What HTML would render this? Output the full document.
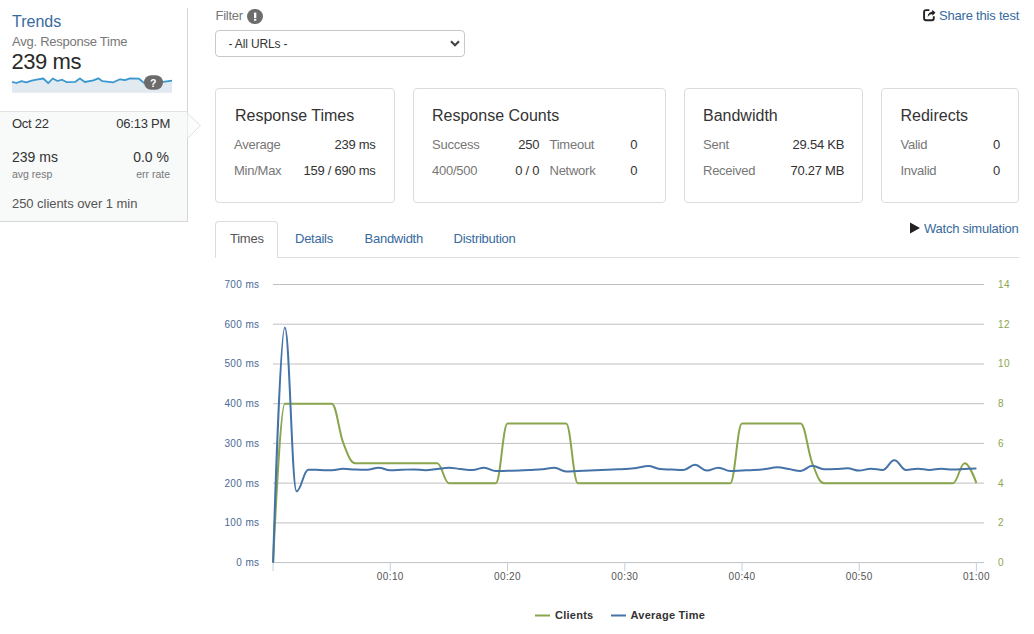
<!DOCTYPE html>
<html><head><meta charset="utf-8">
<style>
html,body{margin:0;padding:0;background:#fff;width:1034px;height:634px;overflow:hidden;position:relative;font-family:"Liberation Sans",sans-serif;}
.t{position:absolute;white-space:nowrap;line-height:1;}
.s13{font-size:13px;letter-spacing:-0.25px;}
.s16{font-size:16px;}
.g{color:#777;}
.d{color:#333;}
.lnk{color:#386a9e;}
.card{position:absolute;top:88px;height:113px;border:1px solid #dcdcdc;border-radius:4px;box-sizing:content-box;}
</style></head>
<body>
<!-- left panel -->
<div style="position:absolute;left:187px;top:8px;width:1px;height:214px;background:#d6d6d6"></div>
<div style="position:absolute;left:0;top:111px;width:187px;height:1px;background:#e2e2e2"></div>
<div style="position:absolute;left:0;top:112px;width:187px;height:109px;background:#f8f9f9"></div>
<div style="position:absolute;left:0;top:221px;width:188px;height:1px;background:#d6d6d6"></div>
<svg style="position:absolute;left:0;top:0" width="220" height="230">
<polyline points="187.5,113.5 200.5,125.5 187.5,138.5" fill="#fcfcfc" stroke="#e0e0e0" stroke-width="1"/>
<path d="M12.1 81.8 L16.5 83.0 L21.4 81.2 L26.3 82.3 L31.6 80.6 L36.4 79.6 L43.3 78.5 L48.2 83.2 L52.7 78.5 L57.6 81.0 L62.0 79.7 L66.9 82.2 L75.4 81.8 L79.9 78.4 L84.8 82.0 L93.3 80.4 L98.3 78.3 L102.5 81.2 L113.3 82.3 L120.0 79.3 L125.0 80.1 L130.0 78.3 L139.0 78.7 L144.0 82.9 L153.0 84.0 L163.2 81.8 L172.0 80.6 L172 92.7 L12.1 92.7 Z" fill="#e1e9f1"/>
<path d="M12.1 81.8 L16.5 83.0 L21.4 81.2 L26.3 82.3 L31.6 80.6 L36.4 79.6 L43.3 78.5 L48.2 83.2 L52.7 78.5 L57.6 81.0 L62.0 79.7 L66.9 82.2 L75.4 81.8 L79.9 78.4 L84.8 82.0 L93.3 80.4 L98.3 78.3 L102.5 81.2 L113.3 82.3 L120.0 79.3 L125.0 80.1 L130.0 78.3 L139.0 78.7 L144.0 82.9 L153.0 84.0 L163.2 81.8 L172.0 80.6" fill="none" stroke="#3a98cf" stroke-width="1.8" stroke-linejoin="round"/>
<rect x="144" y="75.2" width="19" height="14.6" rx="7.3" fill="#6b6b6b"/>
<text x="153.2" y="86.8" font-family="Liberation Sans" font-weight="bold" font-size="10.5" fill="#fff" text-anchor="middle">?</text>
</svg>
<div class="t s16 lnk" style="left:12px;top:14px">Trends</div>
<div class="t s13 g" style="left:12px;top:34.5px">Avg. Response Time</div>
<div class="t" style="left:11.5px;top:51.1px;font-size:22px;letter-spacing:-0.45px;color:#2a2a2a">239 ms</div>
<div class="t s13 d" style="left:12px;top:116.8px">Oct 22</div>
<div class="t s13 d" style="right:864px;top:116.8px">06:13 PM</div>
<div class="t d" style="left:12px;top:149.9px;font-size:14px">239 ms</div>
<div class="t d" style="right:865px;top:149.9px;font-size:14px">0.0 %</div>
<div class="t g" style="left:12px;top:168.6px;font-size:10.5px">avg resp</div>
<div class="t g" style="right:864px;top:168.6px;font-size:10.5px">err rate</div>
<div class="t" style="left:12px;top:197px;color:#555;font-size:13px;letter-spacing:-0.05px">250 clients over 1 min</div>

<!-- filter -->
<div class="t s13 g" style="left:215.5px;top:8.8px">Filter</div>
<div style="position:absolute;left:247.2px;top:8.8px;width:15.4px;height:15.4px;border-radius:8px;background:#6d6d6d"></div>
<svg style="position:absolute;left:246.8px;top:8.3px" width="16" height="16"><rect x="7.0" y="4.6" width="2.3" height="5.4" fill="#fff"/><rect x="7.0" y="10.9" width="2.3" height="1.8" fill="#fff"/></svg>
<div style="position:absolute;left:215px;top:30px;width:248px;height:25px;border:1px solid #c8c8c8;border-radius:4px"></div>
<div class="t d" style="left:228.5px;top:37.7px;font-size:12px;letter-spacing:-0.15px">- All URLs -</div>
<svg style="position:absolute;left:445px;top:35px" width="20" height="16"><polyline points="6,6.2 10,10.2 14,6.2" fill="none" stroke="#444" stroke-width="2.2"/></svg>

<!-- share -->
<svg style="position:absolute;left:921px;top:7px" width="16" height="16">
<path d="M8.4 3.1 H5 Q3.1 3.1 3.1 5 V11.3 Q3.1 13.2 5 13.2 H10.9 Q12.8 13.2 12.8 11.3 V9.2" fill="none" stroke="#222" stroke-width="1.9"/>
<path d="M6.6 9.9 Q7.0 5.3 11.3 4.5 V2.7 L14.5 5.7 L11.3 8.7 V6.9 Q8.4 6.9 6.6 9.9 Z" fill="#222"/>
</svg>
<div class="t s13 lnk" style="left:939px;top:8.9px;letter-spacing:-0.2px">Share this test</div>

<!-- cards -->
<div class="card" style="left:215px;width:178px"></div>
<div class="card" style="left:413px;width:251px"></div>
<div class="card" style="left:684px;width:177px"></div>
<div class="card" style="left:881px;width:136px"></div>

<div class="t s16 d" style="left:235px;top:108.3px">Response Times</div>
<div class="t s13 g" style="left:234px;top:138px">Average</div>
<div class="t s13 d" style="right:658.4px;top:138px">239 ms</div>
<div class="t s13 g" style="left:234px;top:163.7px">Min/Max</div>
<div class="t s13 d" style="right:658.4px;top:163.7px">159 / 690 ms</div>

<div class="t s16 d" style="left:432px;top:108.3px">Response Counts</div>
<div class="t s13 g" style="left:432px;top:138px">Success</div>
<div class="t s13 d" style="right:494.8px;top:138px">250</div>
<div class="t s13 g" style="left:549.5px;top:138px">Timeout</div>
<div class="t s13 d" style="right:396.9px;top:138px">0</div>
<div class="t s13 g" style="left:432px;top:163.7px">400/500</div>
<div class="t s13 d" style="right:494.8px;top:163.7px">0 / 0</div>
<div class="t s13 g" style="left:549.5px;top:163.7px">Network</div>
<div class="t s13 d" style="right:396.9px;top:163.7px">0</div>

<div class="t s16 d" style="left:703px;top:108.3px">Bandwidth</div>
<div class="t s13 g" style="left:703px;top:138px">Sent</div>
<div class="t s13 d" style="right:189.9px;top:138px">29.54 KB</div>
<div class="t s13 g" style="left:703px;top:163.7px">Received</div>
<div class="t s13 d" style="right:189.9px;top:163.7px">70.27 MB</div>

<div class="t s16 d" style="left:900.5px;top:108.3px">Redirects</div>
<div class="t s13 g" style="left:900.5px;top:138px">Valid</div>
<div class="t s13 d" style="right:34px;top:138px">0</div>
<div class="t s13 g" style="left:900.5px;top:163.7px">Invalid</div>
<div class="t s13 d" style="right:34px;top:163.7px">0</div>

<!-- tabs -->
<div style="position:absolute;left:278px;top:257px;width:741px;height:1px;background:#dcdcdc"></div>
<div style="position:absolute;left:215px;top:221px;width:61px;height:36px;border:1px solid #dcdcdc;border-bottom:none;border-radius:4px 4px 0 0;background:#fff"></div>
<div class="t s13" style="left:230px;top:231.8px;color:#555">Times</div>
<div class="t s13 lnk" style="left:295px;top:231.8px">Details</div>
<div class="t s13 lnk" style="left:364.5px;top:231.8px">Bandwidth</div>
<div class="t s13 lnk" style="left:453.5px;top:231.8px">Distribution</div>
<svg style="position:absolute;left:908px;top:220px" width="14" height="16"><path d="M2 2.5 L12 8 L2 13.5 Z" fill="#222"/></svg>
<div class="t s13 lnk" style="left:924px;top:221.6px">Watch simulation</div>

<!-- chart -->
<svg style="position:absolute;left:0;top:0" width="1034" height="634">
<path d="M273 562.6 H984" stroke="#C0C0C0" stroke-width="1"/><path d="M273 522.9 H984" stroke="#C0C0C0" stroke-width="1"/><path d="M273 483.1 H984" stroke="#C0C0C0" stroke-width="1"/><path d="M273 443.4 H984" stroke="#C0C0C0" stroke-width="1"/><path d="M273 403.7 H984" stroke="#C0C0C0" stroke-width="1"/><path d="M273 364.0 H984" stroke="#C0C0C0" stroke-width="1"/><path d="M273 324.2 H984" stroke="#C0C0C0" stroke-width="1"/><path d="M273 284.5 H984" stroke="#C0C0C0" stroke-width="1"/>
<path d="M273.1 562 V571" stroke="#C0D0E0" stroke-width="1"/><path d="M390.3 562 V571" stroke="#C0D0E0" stroke-width="1"/><path d="M507.5 562 V571" stroke="#C0D0E0" stroke-width="1"/><path d="M624.8 562 V571" stroke="#C0D0E0" stroke-width="1"/><path d="M742.0 562 V571" stroke="#C0D0E0" stroke-width="1"/><path d="M859.2 562 V571" stroke="#C0D0E0" stroke-width="1"/><path d="M976.4 562 V571" stroke="#C0D0E0" stroke-width="1"/>
<g font-family="Liberation Sans" font-size="10" fill="#4a6a96" letter-spacing="0.38"><text x="259.5" y="566.0" text-anchor="end">0 ms</text><text x="259.5" y="526.3" text-anchor="end">100 ms</text><text x="259.5" y="486.5" text-anchor="end">200 ms</text><text x="259.5" y="446.8" text-anchor="end">300 ms</text><text x="259.5" y="407.1" text-anchor="end">400 ms</text><text x="259.5" y="367.4" text-anchor="end">500 ms</text><text x="259.5" y="327.6" text-anchor="end">600 ms</text><text x="259.5" y="287.9" text-anchor="end">700 ms</text></g>
<g font-family="Liberation Sans" font-size="10" fill="#89A54E" letter-spacing="0.4"><text x="998" y="566.0">0</text><text x="998" y="526.3">2</text><text x="998" y="486.5">4</text><text x="998" y="446.8">6</text><text x="998" y="407.1">8</text><text x="998" y="367.4">10</text><text x="998" y="327.6">12</text><text x="998" y="287.9">14</text></g>
<g font-family="Liberation Sans" font-size="10" fill="#555" letter-spacing="0.4"><text x="390.3" y="580" text-anchor="middle">00:10</text><text x="507.5" y="580" text-anchor="middle">00:20</text><text x="624.8" y="580" text-anchor="middle">00:30</text><text x="742.0" y="580" text-anchor="middle">00:40</text><text x="859.2" y="580" text-anchor="middle">00:50</text><text x="976.4" y="580" text-anchor="middle">01:00</text></g>
<path d="M 273.10 562.60 C 273.10 562.60 280.13 403.69 284.82 403.69 C 289.51 403.69 291.86 403.69 296.54 403.69 C 301.23 403.69 303.58 403.69 308.27 403.69 C 312.95 403.69 315.30 403.69 319.99 403.69 C 324.68 403.69 327.02 403.69 331.71 403.69 C 336.40 403.69 338.74 431.50 343.43 443.41 C 348.12 455.33 350.47 463.28 355.15 463.28 C 359.84 463.28 362.19 463.28 366.88 463.28 C 371.56 463.28 373.91 463.28 378.60 463.28 C 383.29 463.28 385.63 463.28 390.32 463.28 C 395.01 463.28 397.35 463.28 402.04 463.28 C 406.73 463.28 409.08 463.28 413.76 463.28 C 418.45 463.28 420.80 463.28 425.49 463.28 C 430.17 463.28 432.52 463.28 437.21 463.28 C 441.90 463.28 444.24 483.14 448.93 483.14 C 453.62 483.14 455.96 483.14 460.65 483.14 C 465.34 483.14 467.69 483.14 472.37 483.14 C 477.06 483.14 479.41 483.14 484.10 483.14 C 488.78 483.14 491.13 483.14 495.82 483.14 C 500.51 483.14 502.85 423.55 507.54 423.55 C 512.23 423.55 514.57 423.55 519.26 423.55 C 523.95 423.55 526.30 423.55 530.98 423.55 C 535.67 423.55 538.02 423.55 542.71 423.55 C 547.39 423.55 549.74 423.55 554.43 423.55 C 559.12 423.55 561.46 423.55 566.15 423.55 C 570.84 423.55 573.18 483.14 577.87 483.14 C 582.56 483.14 584.91 483.14 589.59 483.14 C 594.28 483.14 596.63 483.14 601.32 483.14 C 606.00 483.14 608.35 483.14 613.04 483.14 C 617.73 483.14 620.07 483.14 624.76 483.14 C 629.45 483.14 631.79 483.14 636.48 483.14 C 641.17 483.14 643.52 483.14 648.20 483.14 C 652.89 483.14 655.24 483.14 659.93 483.14 C 664.61 483.14 666.96 483.14 671.65 483.14 C 676.34 483.14 678.68 483.14 683.37 483.14 C 688.06 483.14 690.40 483.14 695.09 483.14 C 699.78 483.14 702.13 483.14 706.81 483.14 C 711.50 483.14 713.85 483.14 718.54 483.14 C 723.22 483.14 725.57 483.14 730.26 483.14 C 734.95 483.14 737.29 423.55 741.98 423.55 C 746.67 423.55 749.01 423.55 753.70 423.55 C 758.39 423.55 760.74 423.55 765.42 423.55 C 770.11 423.55 772.46 423.55 777.15 423.55 C 781.83 423.55 784.18 423.55 788.87 423.55 C 793.56 423.55 795.90 423.55 800.59 423.55 C 805.28 423.55 807.62 451.36 812.31 463.28 C 817.00 475.20 819.35 483.14 824.03 483.14 C 828.72 483.14 831.07 483.14 835.76 483.14 C 840.44 483.14 842.79 483.14 847.48 483.14 C 852.17 483.14 854.51 483.14 859.20 483.14 C 863.89 483.14 866.23 483.14 870.92 483.14 C 875.61 483.14 877.96 483.14 882.64 483.14 C 887.33 483.14 889.68 483.14 894.37 483.14 C 899.05 483.14 901.40 483.14 906.09 483.14 C 910.78 483.14 913.12 483.14 917.81 483.14 C 922.50 483.14 924.84 483.14 929.53 483.14 C 934.22 483.14 936.57 483.14 941.25 483.14 C 945.94 483.14 948.29 483.14 952.98 483.14 C 957.66 483.14 960.01 463.28 964.70 463.28 C 969.39 463.28 976.42 483.14 976.42 483.14" fill="none" stroke="#89A54E" stroke-width="2" stroke-linejoin="round"/>
<path d="M 273.10 562.60 C 273.10 562.60 280.13 327.60 284.82 327.60 C 289.51 327.60 291.86 491.30 296.54 491.30 C 301.23 491.30 303.58 469.70 308.27 469.70 C 312.95 469.70 315.30 469.88 319.99 470.00 C 324.68 470.12 327.02 470.30 331.71 470.30 C 336.40 470.30 338.74 468.80 343.43 468.80 C 348.12 468.80 350.47 469.32 355.15 469.50 C 359.84 469.68 362.19 469.70 366.88 469.70 C 371.56 469.70 373.91 467.80 378.60 467.80 C 383.29 467.80 385.63 470.30 390.32 470.30 C 395.01 470.30 397.35 469.98 402.04 469.80 C 406.73 469.62 409.08 469.40 413.76 469.40 C 418.45 469.40 420.80 470.30 425.49 470.30 C 430.17 470.30 432.52 469.52 437.21 469.00 C 441.90 468.48 444.24 467.70 448.93 467.70 C 453.62 467.70 455.96 468.54 460.65 469.00 C 465.34 469.46 467.69 470.00 472.37 470.00 C 477.06 470.00 479.41 467.70 484.10 467.70 C 488.78 467.70 491.13 471.00 495.82 471.00 C 500.51 471.00 502.85 470.88 507.54 470.80 C 512.23 470.72 514.57 470.76 519.26 470.60 C 523.95 470.44 526.30 470.28 530.98 470.00 C 535.67 469.72 538.02 469.66 542.71 469.20 C 547.39 468.74 549.74 467.70 554.43 467.70 C 559.12 467.70 561.46 471.60 566.15 471.60 C 570.84 471.60 573.18 471.22 577.87 471.00 C 582.56 470.78 584.91 470.70 589.59 470.50 C 594.28 470.30 596.63 470.20 601.32 470.00 C 606.00 469.80 608.35 469.70 613.04 469.50 C 617.73 469.30 620.07 469.30 624.76 469.00 C 629.45 468.70 631.79 468.58 636.48 468.00 C 641.17 467.42 643.52 466.10 648.20 466.10 C 652.89 466.10 655.24 468.50 659.93 469.00 C 664.61 469.50 666.96 469.30 671.65 469.50 C 676.34 469.70 678.68 470.00 683.37 470.00 C 688.06 470.00 690.40 464.80 695.09 464.80 C 699.78 464.80 702.13 470.60 706.81 470.60 C 711.50 470.60 713.85 467.70 718.54 467.70 C 723.22 467.70 725.57 471.00 730.26 471.00 C 734.95 471.00 737.29 470.70 741.98 470.50 C 746.67 470.30 749.01 470.30 753.70 470.00 C 758.39 469.70 760.74 469.54 765.42 469.00 C 770.11 468.46 772.46 467.30 777.15 467.30 C 781.83 467.30 784.18 468.26 788.87 469.00 C 793.56 469.74 795.90 471.00 800.59 471.00 C 805.28 471.00 807.62 465.80 812.31 465.80 C 817.00 465.80 819.35 469.20 824.03 469.20 C 828.72 469.20 831.07 469.18 835.76 469.00 C 840.44 468.82 842.79 468.30 847.48 468.30 C 852.17 468.30 854.51 470.60 859.20 470.60 C 863.89 470.60 866.23 468.70 870.92 468.70 C 875.61 468.70 877.96 470.00 882.64 470.00 C 887.33 470.00 889.68 460.30 894.37 460.30 C 899.05 460.30 901.40 470.00 906.09 470.00 C 910.78 470.00 913.12 468.70 917.81 468.70 C 922.50 468.70 924.84 470.00 929.53 470.00 C 934.22 470.00 936.57 468.70 941.25 468.70 C 945.94 468.70 948.29 469.60 952.98 469.60 C 957.66 469.60 960.01 469.22 964.70 469.00 C 969.39 468.78 976.42 468.50 976.42 468.50" fill="none" stroke="#4572A7" stroke-width="2" stroke-linejoin="round"/>
<path d="M535 615.5 H550" stroke="#89A54E" stroke-width="2"/>
<path d="M611 615.5 H626" stroke="#4572A7" stroke-width="2"/>
<g font-family="Liberation Sans" font-size="11" font-weight="bold" fill="#333" letter-spacing="0.25"><text x="555" y="619">Clients</text><text x="630.5" y="619">Average Time</text></g>
</svg>
</body></html>
